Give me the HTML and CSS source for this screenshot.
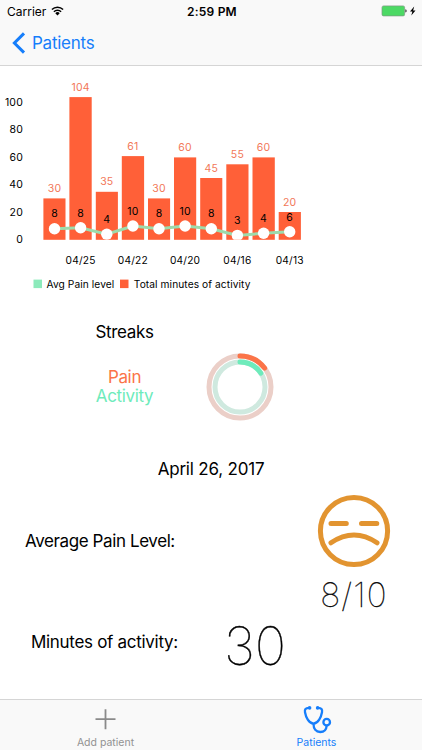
FILE: index.html
```html
<!DOCTYPE html>
<html lang="en">
<head>
    <meta charset="utf-8">
    <title>Patients</title>
    <link rel="stylesheet" href="styles.css">
</head>
<body>
    <header class="header">
        <div class="status">
            <div class="carrier">
                <span>Carrier</span>
                <svg class="wifi" width="13" height="10" viewBox="0 0 13 10">
                    <path d="M0.9 3.5a8 8 0 0 1 11.2 0M2.9 5.7a5.1 5.1 0 0 1 7.2 0" fill="none" stroke="#000" stroke-width="1.5"/>
                    <path d="M4.3 7.2a3.1 3.1 0 0 1 4.4 0L6.5 9.5z"/>
                </svg>
            </div>
            <div class="clock">2:59 PM</div>
            <div class="power">
                <svg width="36" height="12" viewBox="0 0 36 12">
                    <rect x="1" y="0.9" width="22.6" height="10" rx="1.5" fill="#4cd964" stroke="#7d9a82" stroke-width="0.7"/>
                    <path d="M24.2 4.2q1.6 0.3 1.6 1.7t-1.6 1.7z" fill="#555"/>
                    <path d="M33.2 1.6l-4.2 5h2.4l-1.1 4 4.2-5.2h-2.4z" fill="#000"/>
                </svg>
            </div>
        </div>
        <nav class="nav">
            <svg width="14" height="22" viewBox="0 0 14 22">
                <path d="M12 1.4L2.4 11 12 20.6" fill="none" stroke="#167efb" stroke-width="3"/>
            </svg>
            <span>Patients</span>
        </nav>
    </header>

    <main class="content">
        <svg class="chart" width="422" height="234" viewBox="0 66 422 234">
            <g class="axis y-axis">
                <text x="23" y="106">100</text>
                <text x="23" y="133.3">80</text>
                <text x="23" y="160.7">60</text>
                <text x="23" y="188.1">40</text>
                <text x="23" y="215.5">20</text>
                <text x="23" y="242.9">0</text>
            </g>
            <g class="bars">
                <rect x="43.4" y="198.4" width="22.1" height="41.4"/>
                <rect x="69.4" y="97.1" width="22.3" height="142.7"/>
                <rect x="95.8" y="191.8" width="22.1" height="48"/>
                <rect x="121.8" y="156.1" width="22.3" height="83.7"/>
                <rect x="148" y="198.4" width="22.1" height="41.4"/>
                <rect x="174" y="157.4" width="22.2" height="82.4"/>
                <rect x="200.2" y="178" width="22.1" height="61.8"/>
                <rect x="226.3" y="164.3" width="22.2" height="75.5"/>
                <rect x="252.5" y="157.4" width="22.3" height="82.4"/>
                <rect x="278.7" y="212" width="22.2" height="27.8"/>
            </g>
            <g class="bar-labels">
                <text x="54.5" y="192">30</text>
                <text x="80.6" y="90.5">104</text>
                <text x="106.8" y="185.3">35</text>
                <text x="132.9" y="149.7">61</text>
                <text x="159" y="192">30</text>
                <text x="185.1" y="151">60</text>
                <text x="211.3" y="171.6">45</text>
                <text x="237.4" y="157.9">55</text>
                <text x="263.6" y="151">60</text>
                <text x="289.7" y="205.6">20</text>
            </g>
            <clipPath id="plot"><rect x="40" y="90" width="265" height="149.8"/></clipPath>
            <g clip-path="url(#plot)">
                <polyline class="pain-line" points="54.5,228.7 80.6,227.8 106.8,234.2 132.9,226 159,228.7 185.1,226 211.3,228.7 237.4,235.4 263.6,233.3 289.7,231.7"/>
                <g class="dots">
                    <circle cx="54.5" cy="228.7" r="5.7"/>
                    <circle cx="80.6" cy="227.8" r="5.7"/>
                    <circle cx="106.8" cy="234.2" r="5.7"/>
                    <circle cx="132.9" cy="226" r="5.7"/>
                    <circle cx="159" cy="228.7" r="5.7"/>
                    <circle cx="185.1" cy="226" r="5.7"/>
                    <circle cx="211.3" cy="228.7" r="5.7"/>
                    <circle cx="237.4" cy="235.4" r="5.7"/>
                    <circle cx="263.6" cy="233.3" r="5.7"/>
                    <circle cx="289.7" cy="231.7" r="5.7"/>
                </g>
            </g>
            <g class="pain-labels">
                <text x="54.5" y="217.4">8</text>
                <text x="80.6" y="216.8">8</text>
                <text x="106.8" y="223.2">4</text>
                <text x="132.9" y="214.8">10</text>
                <text x="159" y="217.4">8</text>
                <text x="185.1" y="214.8">10</text>
                <text x="211.3" y="217.4">8</text>
                <text x="237.4" y="224.3">3</text>
                <text x="263.6" y="222.3">4</text>
                <text x="289.7" y="220.8">6</text>
            </g>
            <g class="axis x-axis">
                <text x="80.6" y="263.6">04/25</text>
                <text x="132.9" y="263.6">04/22</text>
                <text x="185.1" y="263.6">04/20</text>
                <text x="237.4" y="263.6">04/16</text>
                <text x="289.7" y="263.6">04/13</text>
            </g>
            <g class="legend">
                <rect x="33.5" y="279.6" width="8.5" height="8.5" fill="#8ceabb"/>
                <text x="46.5" y="287.6">Avg Pain level</text>
                <rect x="120" y="279.6" width="8.5" height="8.5" fill="#ff6038"/>
                <text x="133.8" y="287.6">Total minutes of activity</text>
            </g>
        </svg>

        <section class="streaks">
            <div class="streak-text">
                <h2>Streaks</h2>
                <div class="pain">Pain</div>
                <div class="activity">Activity</div>
            </div>
            <svg class="rings" width="68" height="68" viewBox="0 0 68 68">
                <g fill="none" stroke-linecap="round">
                    <circle cx="34" cy="34" r="31" stroke="#ebcfc8" stroke-width="5"/>
                    <circle cx="34" cy="34" r="25" stroke="#cfe9df" stroke-width="5"/>
                    <path d="M34 3a31 31 0 0 1 24.6 12.1" stroke="#fb7448" stroke-width="5"/>
                    <path d="M34 9a25 25 0 0 1 20.8 11.1" stroke="#6eebbb" stroke-width="5"/>
                </g>
            </svg>
        </section>

        <h2 class="date">April 26, 2017</h2>

        <section class="row pain-row">
            <div class="label">Average Pain Level:</div>
            <div class="score">
                <svg class="face" width="74" height="74" viewBox="0 0 74 74">
                    <g fill="none" stroke="#e29430" stroke-width="5" stroke-linecap="round">
                        <circle cx="37" cy="37" r="33.6"/>
                        <path d="M14 29.5h15.3M44.5 29.5h15.3M14 48.8q23-15.5 46 0"/>
                    </g>
                </svg>
                <div class="score-value">8/10</div>
            </div>
        </section>

        <section class="row minutes-row">
            <div class="label">Minutes of activity:</div>
            <div class="minutes-value">30</div>
        </section>
    </main>

    <footer class="tabs">
        <div class="tab">
            <svg width="32" height="32" viewBox="0 0 32 32">
                <path d="M15.5 6.2v20M5.5 16.2h20" fill="none" stroke="#8a8a8a" stroke-width="1.8"/>
            </svg>
            <span>Add patient</span>
        </div>
        <div class="tab active">
            <svg width="32" height="32" viewBox="0 0 32 32">
                <g fill="none" stroke="#167efb" stroke-width="2.3" stroke-linecap="round">
                    <path d="M7.9 4.9C4.5 4.9 3.500 6.500 4 9.200c0.900 4.900 3.700 11.400 8.500 11.400S20.100 14.100 21 9.200c0.500-2.700-0.500-4.300-3.900-4.300"/>
                    <path d="M12.500 20.800c0 5 2.500 8.200 6.700 8.200s6.200-2.800 6.400-6"/>
                    <circle cx="25.700" cy="19.200" r="3.300"/>
                </g>
                <circle cx="8.600" cy="4.900" r="1.800" fill="#167efb"/>
                <circle cx="16.600" cy="4.900" r="1.800" fill="#167efb"/>
            </svg>
            <span>Patients</span>
        </div>
    </footer>
</body>
</html>
```
FILE: styles.css
```css
* {
    box-sizing: border-box;
}

body {
    margin: 0;
    width: 422px;
    height: 750px;
    display: flex;
    flex-direction: column;
    overflow: hidden;
    background: #fff;
    color: #000;
    font-family: Inter, "Liberation Sans", sans-serif;
}

.header {
    height: 66px;
    background: #f9f9f9;
    border-bottom: 1px solid #d5d5d5;
}

.status {
    display: grid;
    grid-template-columns: 1fr 60px 1fr;
    align-items: center;
    height: 22px;
    padding: 0 5px 0 7px;
    font-size: 12px;
}

.carrier {
    display: flex;
    align-items: center;
    gap: 5px;
}

.clock {
    font-weight: 600;
    letter-spacing: 0.2px;
    text-align: center;
    white-space: nowrap;
}

.power {
    display: flex;
    justify-content: flex-end;
}

.nav {
    display: flex;
    align-items: center;
    gap: 6px;
    height: 42px;
    padding-left: 12px;
    color: #167efb;
    font-size: 17px;
    letter-spacing: -0.25px;
}

.content {
    flex: 1;
}

.chart {
    display: block;
    font-size: 10.5px;
    letter-spacing: 0.2px;
}

.y-axis {
    text-anchor: end;
}

.x-axis,
.bar-labels,
.pain-labels {
    text-anchor: middle;
}

.x-axis {
    font-size: 10.2px;
}

.legend {
    font-size: 10.2px;
    letter-spacing: 0.08px;
}

.bars {
    fill: #ff6038;
}

.bar-labels {
    fill: #f27758;
}

.pain-line {
    fill: none;
    stroke: #9ddbac;
    stroke-width: 3;
}

.dots {
    fill: #fff;
}

h2 {
    margin: 0;
    font-size: 17px;
    font-weight: 400;
    line-height: 20px;
    letter-spacing: -0.2px;
}

.streaks {
    display: flex;
    height: 159px;
    padding: 22px 0 0 85px;
}

.streak-text {
    width: 79px;
    text-align: center;
    font-size: 17px;
    line-height: 19px;
    letter-spacing: -0.35px;
}

.streak-text h2 {
    margin-bottom: 26px;
    letter-spacing: -0.35px;
}

.pain {
    color: #fb7448;
}

.activity {
    color: #6eebbb;
}

.rings {
    margin: 31px 0 0 41.6px;
}

.date {
    text-align: center;
}

.row {
    display: flex;
}

.label {
    font-size: 17px;
    line-height: 20px;
    letter-spacing: -0.4px;
    white-space: nowrap;
}

.pain-row {
    height: 133px;
    padding: 15px 31px 0 25px;
    justify-content: space-between;
}

.pain-row .label {
    margin-top: 37px;
}

.score {
    display: flex;
    flex-direction: column;
    align-items: center;
}

.face {
    flex-shrink: 0;
}

.score-value {
    margin-top: 7px;
    font-size: 33.5px;
    font-weight: 100;
    line-height: 40px;
    letter-spacing: 1.2px;
    -webkit-text-stroke: 0.3px #000;
}

.minutes-row {
    padding: 3px 0 0 31px;
}

.minutes-row .label {
    width: 193px;
    margin-top: 17px;
    letter-spacing: -0.3px;
}

.minutes-value {
    font-size: 53px;
    font-weight: 100;
    line-height: 62px;
    letter-spacing: 0;
    -webkit-text-stroke: 0.4px #000;
}

.tabs {
    display: flex;
    height: 51px;
    background: #f9f9f9;
    border-top: 1px solid #d5d5d5;
}

.tab {
    flex: 1;
    display: flex;
    flex-direction: column;
    align-items: center;
    padding-top: 3px;
    color: #929292;
    font-size: 10.5px;
    line-height: 15px;
}

.tab.active {
    color: #167efb;
}
```
